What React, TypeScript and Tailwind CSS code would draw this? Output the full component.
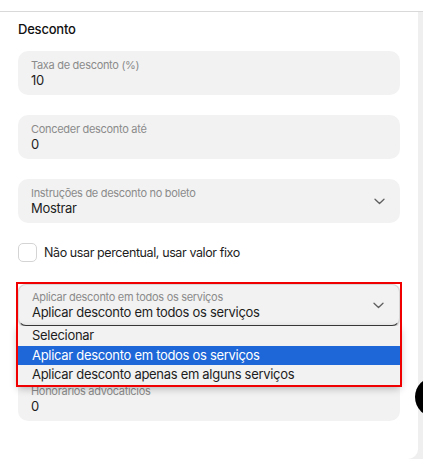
import { ReactNode } from "react";

const font = { fontFamily: "Inter, 'Noto Sans', sans-serif" };

function Chevron() {
  return (
    <svg width="11" height="7" viewBox="0 0 11 7" fill="none" className="shrink-0">
      <path d="M1 1.2l4.5 4.3L10 1.2" stroke="#5f5f5f" strokeWidth="1.3" strokeLinecap="round" strokeLinejoin="round" />
    </svg>
  );
}

function Field({ label, value, select, className = "" }: { label: string; value: string; select?: boolean; className?: string }) {
  return (
    <div className={`flex h-[44px] items-center rounded-[10px] bg-[#f2f2f2] pl-[13px] pr-[15px] ${className}`}>
      <div className="flex min-w-0 flex-1 flex-col">
        <span className="text-[11px] leading-[14px] tracking-[-0.3px] text-[#8b8b8b]">{label}</span>
        <span className="text-[13px] leading-[17px] tracking-[-0.3px] text-[#1d1d1d]">{value}</span>
      </div>
      {select && <Chevron />}
    </div>
  );
}

function Option({ children, active }: { children: ReactNode; active?: boolean }) {
  return (
    <div
      className={`flex h-[19.5px] items-center px-[14px] text-[13px] tracking-[-0.3px] ${
        active ? "bg-[#1d67d8] text-white" : "text-[#1d1d1d]"
      }`}
    >
      {children}
    </div>
  );
}

export default function App() {
  return (
    <div className="relative h-[459px] w-[423px] overflow-hidden bg-[#efefef]" style={font}>
      <div className="h-[12px] border-b border-[#d9d9d9] bg-white" />
      <div className="flex">
        <div className="flex h-[447px] w-[418px] flex-col rounded-br-[10px] bg-white px-[18px] pt-[9px]">
          <h2 className="text-[13px] font-medium leading-[16px] tracking-[-0.2px] text-[#111]">Desconto</h2>

          <div className="mt-[14px] flex flex-col gap-5">
            <Field label="Taxa de desconto (%)" value="10" />
            <Field label="Conceder desconto até" value="0" />
            <Field label="Instruções de desconto no boleto" value="Mostrar" select />

            <label className="flex h-[19px] items-center gap-[7px]">
              <span className="h-[19px] w-[19px] rounded-[5px] border border-[#d4d4d4] bg-white" />
              <span className="pt-[1px] text-[12.5px] tracking-[-0.4px] text-[#1d1d1d]">Não usar percentual, usar valor fixo</span>
            </label>

            <div className="relative">
              <div className="mt-[2px] flex h-[42px] items-center rounded-[8px] border border-[#d8d8d8] border-b-[#3b3b3b] bg-[#f2f2f2] pl-[13px] pr-[15px] shadow-[0_1px_2px_rgba(0,0,0,0.25)]">
                <div className="flex min-w-0 flex-1 flex-col">
                  <span className="text-[11px] leading-[14px] tracking-[-0.3px] text-[#8b8b8b]">Aplicar desconto em todos os serviços</span>
                  <span className="text-[13px] leading-[17px] tracking-[-0.3px] text-[#1d1d1d]">Aplicar desconto em todos os serviços</span>
                </div>
                <Chevron />
              </div>

              <div className="absolute left-0 right-0 top-[44px] z-10 bg-[#f2f2f2] shadow-[0_3px_8px_rgba(0,0,0,0.3)]">
                <Option>Selecionar</Option>
                <Option active>Aplicar desconto em todos os serviços</Option>
                <Option>Aplicar desconto apenas em alguns serviços</Option>
              </div>

              <div className="pointer-events-none absolute -left-[2px] -right-[2px] top-0 z-20 h-[105px] border-2 border-[#f00000]" />
            </div>

            <Field label="Honorários advocatícios" value="0" className="mt-[31px]" />
          </div>
        </div>
      </div>

      <div className="absolute left-[415px] top-[377px] h-[40px] w-[40px] rounded-full bg-black" />
    </div>
  );
}
